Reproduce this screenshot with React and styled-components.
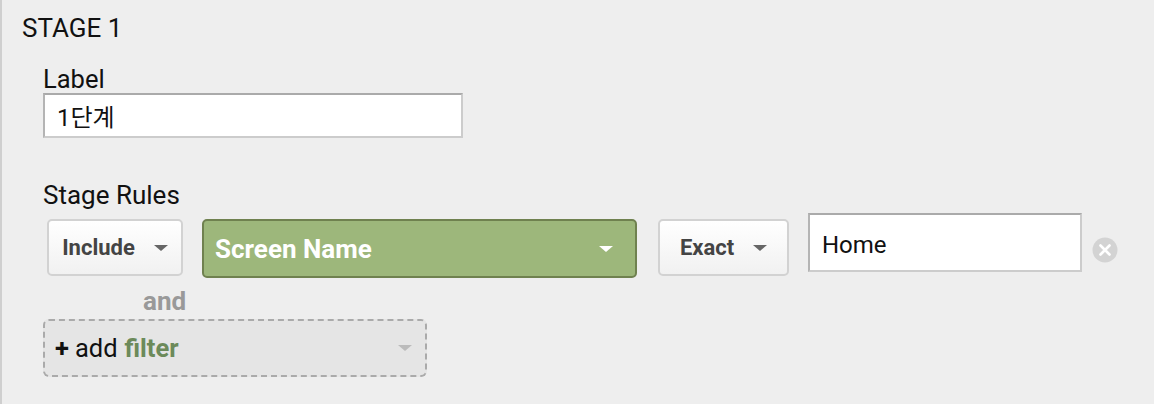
import styled, { createGlobalStyle } from "styled-components";

const Global = createGlobalStyle`
  html, body {
    margin: 0;
    padding: 0;
    background: #eeeeee;
  }
  body {
    font-family: Roboto, "Noto Sans CJK KR", sans-serif;
    color: #111;
  }
`

const Panel = styled.section`
  box-sizing: border-box;
  height: 404px;
  background: #eeeeee;
  border-left: 2px solid #cfcfcf;
  padding: 14px 0 0 20px;
`
const StageTitle = styled.h2`
  margin: 0;
  font-weight: 400;
  font-size: 26px;
  line-height: 28px;
  color: #111;
`
const Body = styled.div`
  padding: 23px 0 0 21px;
`
const FieldLabel = styled.div`
  font-size: ${p => p.$size || 25.5}px;
  line-height: 28px;
  color: #111;
`
const TextBox = styled.div`
  box-sizing: border-box;
  width: ${p => p.$w}px;
  height: ${p => p.$h}px;
  background: #fff;
  border: 2px solid #cccccc;
  border-top-color: #aaaaaa;
  border-left-color: #b4b4b4;
  display: flex;
  align-items: center;
  padding: ${p => p.$drop || 0}px 12px 0;
  font-size: 24px;
  color: #111;
`
const Rules = styled.div`
  margin-top: 43px;
`
const RuleRow = styled.div`
  display: flex;
  align-items: flex-start;
  margin-top: 4px;
  padding-left: 4px;
`
const Select = styled.div`
  box-sizing: border-box;
  width: ${p => p.$w}px;
  height: ${p => (p.$green ? 59 : 57)}px;
  margin: 6px ${p => p.$gap}px 0 0;
  display: flex;
  align-items: center;
  justify-content: ${p => (p.$green ? "space-between" : "center")};
  gap: 19px;
  padding: 0 ${p => (p.$green ? 22 : 0)}px 0 ${p => (p.$green ? 11 : 0)}px;
  border-radius: 5px;
  font-weight: 700;
  font-size: ${p => (p.$green ? 26 : 22)}px;
  color: ${p => (p.$green ? "#fff" : "#444")};
  background: ${p => (p.$green ? "#9db77b" : "linear-gradient(#ffffff, #f1f1f1)")};
  border: 2px solid ${p => (p.$green ? "#6f814f" : "#d2d2d2")};
`
const Caret = styled.span`
  width: 0;
  height: 0;
  border-left: 7px solid transparent;
  border-right: 7px solid transparent;
  border-top: 6px solid ${p => p.$color};
`
const ClearIcon = styled.svg`
  margin: 24px 0 0 10px;
`
const AndText = styled.div`
  margin: 10px 0 0 100px;
  font-weight: 700;
  font-size: 26px;
  line-height: 26px;
  color: #999;
`
const AddFilter = styled.div`
  box-sizing: border-box;
  width: 384px;
  height: 58px;
  margin-top: 5px;
  border: 2px dashed #aaaaaa;
  border-radius: 6px;
  background: #e5e5e5;
  display: flex;
  align-items: center;
  justify-content: space-between;
  padding: 0 13px 0 10px;
  font-size: 25.5px;
  color: #111;
`
const Plus = styled.b`
  font-weight: 700;
  margin-right: 6px;
`
const FilterWord = styled.b`
  font-weight: 700;
  color: #6c8a5a;
  margin-left: 7px;
`

export default function App() {
  return (
    <>
      <Global />
      <Panel>
        <StageTitle>STAGE 1</StageTitle>
        <Body>
          <FieldLabel>Label</FieldLabel>
          <TextBox $w={420} $h={45}>1단계</TextBox>
          <Rules>
            <FieldLabel $size={26}>Stage Rules</FieldLabel>
            <RuleRow>
              <Select $w={136} $gap={19}>Include<Caret $color="#666" /></Select>
              <Select $w={435} $gap={21} $green>Screen Name<Caret $color="#fff" /></Select>
              <Select $w={131} $gap={19}>Exact<Caret $color="#666" /></Select>
              <TextBox $w={274} $h={59} $drop={4}>Home</TextBox>
              <ClearIcon width="26" height="26" viewBox="0 0 26 26">
                <circle cx="13" cy="13" r="12.5" fill="#d3d3d3" />
                <path d="M8.5 8.5 L17.5 17.5 M17.5 8.5 L8.5 17.5" stroke="#fff" strokeWidth="2.6" strokeLinecap="round" />
              </ClearIcon>
            </RuleRow>
            <AndText>and</AndText>
            <AddFilter>
              <span><Plus>+</Plus>add<FilterWord>filter</FilterWord></span>
              <Caret $color="#bbb" />
            </AddFilter>
          </Rules>
        </Body>
      </Panel>
    </>
  );
}
